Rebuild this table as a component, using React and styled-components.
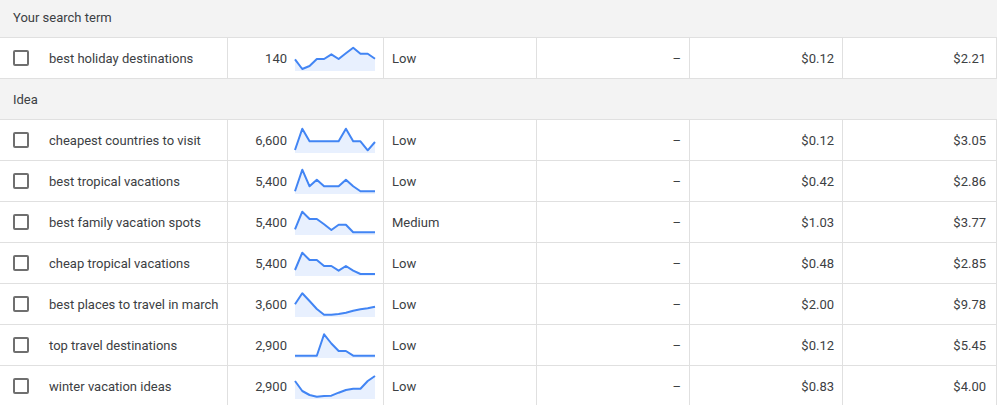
import React from 'react';
import styled, { createGlobalStyle } from 'styled-components';

const GlobalStyle = createGlobalStyle`
  html, body {
    margin: 0;
    padding: 0;
    background: #ffffff;
    overflow: hidden;
  }
  body {
    font-family: Roboto, 'Liberation Sans', Arial, sans-serif;
    color: #3c4043;
  }
`;

const Table = styled.div`
  width: 997px;
  margin-top: -3px;
  font-size: 13px;
`;

const GroupHeader = styled.div`
  height: 40px;
  display: flex;
  align-items: center;
  padding-left: 13px;
  background: #f3f3f3;
  border-bottom: 1px solid #e0e0e0;
  color: #3c4043;
`;

const Row = styled.div`
  display: grid;
  grid-template-columns: 227px 156px 153px 153px 153px 155px;
  height: 41px;
  border-bottom: 1px solid #e0e0e0;
  box-sizing: border-box;
`;

const KeywordCell = styled.div`
  display: flex;
  align-items: center;
  gap: 20px;
  padding-left: 13px;
`;

const Checkbox = styled.span`
  width: 16px;
  height: 16px;
  box-sizing: border-box;
  border: 2px solid #6f6f6f;
  border-radius: 2px;
  flex-shrink: 0;
`;

const Cell = styled.div`
  display: flex;
  align-items: center;
  justify-content: ${p => (p.$right ? 'flex-end' : 'flex-start')};
  gap: 8px;
  padding: 0 ${p => (p.$last ? '10px' : '8px')} 0 8px;
  border-left: 1px solid #e0e0e0;
  border-right: ${p => (p.$last ? '1px solid #e0e0e0' : 'none')};
  white-space: nowrap;
`;

const Sparkline = ({ points }) => {
  const step = 80 / (points.length - 1);
  const coords = points.map((y, i) => `${(i * step).toFixed(2)},${y}`);
  const line = coords.join(' ');
  const area = `0,26 ${line} 80,26`;
  return (
    <svg width="80" height="26" viewBox="0 0 80 26" style={{ display: 'block', overflow: 'visible' }}>
      <polygon points={area} fill="#e8f0fe" />
      <polyline points={line} fill="none" stroke="#4285f4" strokeWidth="2" strokeLinejoin="round" />
    </svg>
  );
};

const KeywordRow = ({ item }) => (
  <Row>
    <KeywordCell>
      <Checkbox />
      <span>{item.keyword}</span>
    </KeywordCell>
    <Cell $right>
      <span>{item.searches}</span>
      <Sparkline points={item.trend} />
    </Cell>
    <Cell>{item.competition}</Cell>
    <Cell $right>–</Cell>
    <Cell $right>{item.low}</Cell>
    <Cell $right $last>{item.high}</Cell>
  </Row>
);

const searchTerm = {
  keyword: 'best holiday destinations',
  searches: '140',
  trend: [14.3, 24, 21, 14, 14, 9.3, 14, 8.3, 2.7, 8.7, 8.7, 13.7],
  competition: 'Low',
  low: '$0.12',
  high: '$2.21',
};

const ideas = [
  {
    keyword: 'cheapest countries to visit',
    searches: '6,600',
    trend: [23, 1.7, 14.3, 14.3, 14.3, 14.3, 14.3, 1.7, 14.3, 14.3, 23.3, 15],
    competition: 'Low',
    low: '$0.12',
    high: '$3.05',
  },
  {
    keyword: 'best tropical vacations',
    searches: '5,400',
    trend: [23.3, 1.7, 18.3, 11.7, 18.3, 18.3, 18.3, 11.7, 18.3, 23.3, 23.3, 23.3],
    competition: 'Low',
    low: '$0.42',
    high: '$2.86',
  },
  {
    keyword: 'best family vacation spots',
    searches: '5,400',
    trend: [20.3, 2.7, 10, 10, 15.3, 21, 15.7, 15.7, 23.3, 23.3, 23.3, 23.3],
    competition: 'Medium',
    low: '$1.03',
    high: '$3.77',
  },
  {
    keyword: 'cheap tropical vacations',
    searches: '5,400',
    trend: [20, 2.7, 10, 10, 16, 16, 20.7, 16, 20.7, 24, 24, 24],
    competition: 'Low',
    low: '$0.48',
    high: '$2.85',
  },
  {
    keyword: 'best places to travel in march',
    searches: '3,600',
    trend: [13.3, 2.3, 10, 18, 23.7, 23.7, 23, 21.7, 19.7, 18.3, 17.3, 15.7],
    competition: 'Low',
    low: '$2.00',
    high: '$9.78',
  },
  {
    keyword: 'top travel destinations',
    searches: '2,900',
    trend: [23.7, 23.7, 23.7, 23.7, 2.3, 11.5, 19, 19, 23.7, 23.7, 23.7, 23.7],
    competition: 'Low',
    low: '$0.12',
    high: '$5.45',
  },
  {
    keyword: 'winter vacation ideas',
    searches: '2,900',
    trend: [8, 18, 22, 23.7, 23, 22.7, 19.7, 17, 15.7, 15.7, 8, 3],
    competition: 'Low',
    low: '$0.83',
    high: '$4.00',
  },
];

const App = () => (
  <>
    <GlobalStyle />
    <Table>
      <GroupHeader>Your search term</GroupHeader>
      <KeywordRow item={searchTerm} />
      <GroupHeader>Idea</GroupHeader>
      {ideas.map(item => (
        <KeywordRow key={item.keyword} item={item} />
      ))}
    </Table>
  </>
);

export default App;
